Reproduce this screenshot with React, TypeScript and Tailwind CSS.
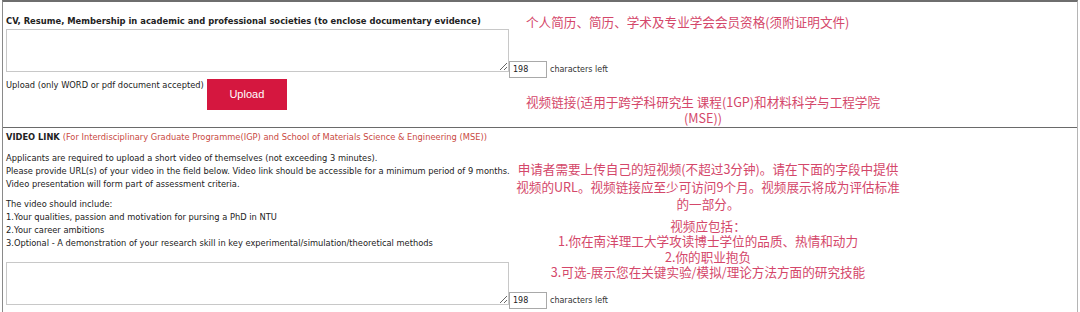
import React, { useState } from 'react';

const Counter: React.FC<{ value: number }> = ({ value }) => (
  <div className="flex items-center">
    <input
      type="text"
      readOnly
      value={value}
      className="w-[38px] h-[17px] border border-[#a9a9a9] bg-white px-[3px] text-[8px] text-[#222] outline-none font-['DejaVu_Sans',sans-serif]"
    />
    <span className="ml-[3px] text-[8px] text-[#333]">characters left</span>
  </div>
);

const Area: React.FC = () => (
  <textarea className="w-[503px] h-[43px] shrink-0 border border-[#c8c8c8] bg-white resize outline-none" />
);

const App: React.FC = () => {
  const [left] = useState(198);

  return (
    <div className="w-[1080px] h-[312px] overflow-hidden bg-white font-['DejaVu_Sans',sans-serif] text-[#222]">
      <div className="ml-[2px] mr-[2px] border-t-2 border-l border-r border-t-[#6e6e6e] border-l-[#8a8a8a] border-r-[#b5b5b5]">
        {/* CV section */}
        <div className="grid border-b border-[#6a6a6a]">
          <div className="col-start-1 row-start-1 pl-[3px] pt-[14px] pb-[17px]">
            <div className="text-[8.4px] font-bold leading-[10px]">
              CV, Resume, Membership in academic and professional societies (to enclose documentary evidence)
            </div>
            <div className="flex items-start mt-[3px]">
              <Area />
              <div className="mt-[32px]">
                <Counter value={left} />
              </div>
            </div>
            <div className="flex items-start mt-[1px]">
              <span className="text-[8.3px] leading-[10px] mt-[1px]">Upload (only WORD or pdf document accepted)</span>
              <button className="ml-[3px] w-[80px] h-[31px] bg-[#d5173f] text-white text-[11px] font-['Liberation_Sans',Arial,sans-serif]">
                Upload
              </button>
            </div>
          </div>
          <div className="col-start-1 row-start-1 pointer-events-none w-[900px] pl-[523px] pt-[12px] flex flex-col font-['Noto_Sans_CJK_SC',sans-serif] text-[#d4476a] text-[12.6px] leading-[16px]">
            <div className="whitespace-nowrap">个人简历、简历、学术及专业学会会员资格(须附证明文件)</div>
            <div className="mt-[64px] -ml-[23px] text-center whitespace-nowrap">
              视频链接(适用于跨学科研究生 课程(1GP)和材料科学与工程学院
              <br />
              (MSE))
            </div>
          </div>
        </div>

        {/* Video link section */}
        <div className="grid">
          <div className="col-start-1 row-start-1 pl-[3px] pt-[3px] pb-[10px] text-[8.3px] leading-[13px]">
            <div>
              <span className="font-bold">VIDEO LINK </span>
              <span className="text-[#c9493f]">(For Interdisciplinary Graduate Programme(IGP) and School of Materials Science &amp; Engineering (MSE))</span>
            </div>
            <div className="mt-[8px]">
              <div>Applicants are required to upload a short video of themselves (not exceeding 3 minutes).</div>
              <div>Please provide URL(s) of your video in the field below. Video link should be accessible for a minimum period of 9 months.</div>
              <div>Video presentation will form part of assessment criteria.</div>
            </div>
            <div className="mt-[7px]">
              <div>The video should include:</div>
              <div>1.Your qualities, passion and motivation for pursing a PhD in NTU</div>
              <div>2.Your career ambitions</div>
              <div>3.Optional - A demonstration of your research skill in key experimental/simulation/theoretical methods</div>
            </div>
            <div className="flex items-start mt-[12px]">
              <Area />
              <div className="mt-[30px]">
                <Counter value={left} />
              </div>
            </div>
          </div>
          <div className="col-start-1 row-start-1 pointer-events-none w-[900px] pl-[510px] pt-[32px] flex flex-col items-center text-center font-['Noto_Sans_CJK_SC',sans-serif] text-[#d4476a] text-[12.6px]">
            <div className="leading-[17.5px] whitespace-nowrap">
              申请者需要上传自己的短视频(不超过3分钟)。请在下面的字段中提供
              <br />
              视频的URL。视频链接应至少可访问9个月。视频展示将成为评估标准
              <br />
              的一部分。
            </div>
            <div className="mt-[5px] leading-[15.5px] whitespace-nowrap">
              视频应包括：
              <br />
              1.你在南洋理工大学攻读博士学位的品质、热情和动力
              <br />
              2.你的职业抱负
              <br />
              3.可选-展示您在关键实验/模拟/理论方法方面的研究技能
            </div>
          </div>
        </div>
      </div>
    </div>
  );
};

export default App;
